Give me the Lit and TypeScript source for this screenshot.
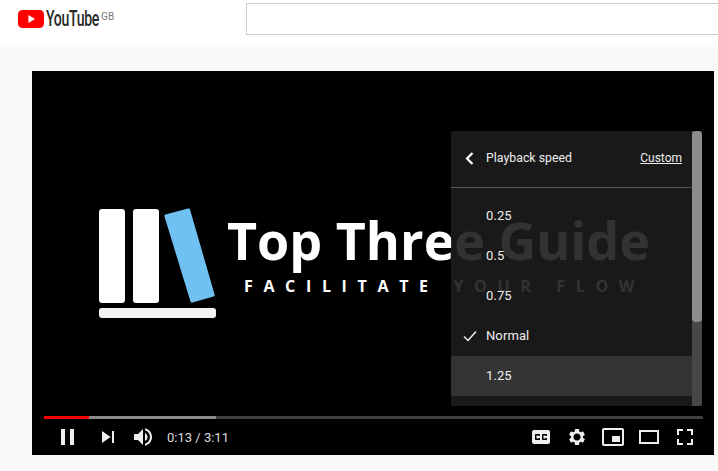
import { LitElement, html, css, svg } from "lit";
import { customElement } from "lit/decorators.js";

const speeds = ["0.25", "0.5", "0.75", "Normal", "1.25"];

const icon = (body: unknown) => html`<svg class="ic" viewBox="0 0 36 36" width="36" height="36">${body}</svg>`;

const leftIcons = [
  svg`<path d="M12,26h4V10h-4zM21,10v16h4V10z"/>`,
  svg`<path d="M12,24 20.5,18 12,12V24zM22,12v12h2V12z"/>`,
  svg`<path d="M8,21L12,21L17,26L17,10L12,15L8,15L8,21ZM19,14L19,22C20.48,21.32 21.5,19.77 21.5,18C21.5,16.26 20.48,14.74 19,14ZM19,11.29C21.89,12.15 24,14.83 24,18C24,21.17 21.89,23.85 19,24.71L19,26.77C23.01,25.86 26,22.28 26,18C26,13.72 23.01,10.14 19,9.23L19,11.29Z"/>`,
];
const rightIcons = [
  svg`<path d="M11,11C9.9,11 9,11.9 9,13L9,23C9,24.1 9.9,25 11,25L25,25C26.1,25 27,24.1 27,23L27,13C27,11.9 26.1,11 25,11L11,11ZM17,17L15.5,17L15.5,16.5L13.5,16.5L13.5,19.5L15.5,19.5L15.5,19L17,19L17,20C17,20.55 16.55,21 16,21L13,21C12.45,21 12,20.55 12,20L12,16C12,15.45 12.45,15 13,15L16,15C16.55,15 17,15.45 17,16L17,17ZM24,17L22.5,17L22.5,16.5L20.5,16.5L20.5,19.5L22.5,19.5L22.5,19L24,19L24,20C24,20.55 23.55,21 23,21L20,21C19.45,21 19,20.55 19,20L19,16C19,15.45 19.45,15 20,15L23,15C23.55,15 24,15.45 24,16L24,17Z" fill-rule="evenodd"/>`,
  svg`<path d="M23.94,18.78c.03-.25.05-.51.05-.78s-.02-.53-.05-.78l1.69-1.32c.15-.12.19-.34.1-.51l-1.6-2.77c-.1-.18-.31-.24-.49-.18l-1.99.8c-.42-.32-.86-.58-1.35-.78L20,10.34c-.03-.19-.2-.34-.4-.34h-3.2c-.2,0-.37.15-.4.34l-.3,2.12c-.49.2-.94.47-1.35.78l-1.99-.8c-.18-.07-.39,0-.49.18l-1.6,2.77c-.1.18-.06.39.1.51l1.69,1.32c-.04.25-.07.52-.07.78s.02.53.05.78l-1.69,1.32c-.15.12-.19.34-.1.51l1.6,2.77c.1.18.31.24.49.18l1.99-.8c.42.32.86.58 1.35.78l.3,2.12c.03.19.2.34.4.34h3.2c.2,0 .37-.15.4-.34l.3-2.12c.49-.2.94-.47 1.35-.78l1.99.8c.18.07.39,0 .49-.18l1.6-2.77c.1-.18.06-.39-.1-.51l-1.67-1.32zM18,21.6c-1.98,0-3.6-1.62-3.6-3.6s1.62-3.6 3.6-3.6 3.6,1.62 3.6,3.6-1.62,3.6-3.6,3.6z"/>`,
  svg`<path d="M25,17L17,17L17,23L25,23ZM29,25L29,10.98C29,9.88 28.1,9 27,9L9,9C7.9,9 7,9.88 7,10.98L7,25C7,26.1 7.9,27 9,27L27,27C28.1,27 29,26.1 29,25ZM27,25.02L9,25.02L9,10.97L27,10.97Z" fill-rule="evenodd"/>`,
  svg`<path d="M28,11V25H8V11ZM10,13V23H26V13Z" fill-rule="evenodd"/>`,
  svg`<path d="M10,16h2v-4h4v-2H10zM20,10v2h4v4h2V10zM24,24h-4v2h6v-6h-2zM12,20H10v6h6v-2h-4z"/>`,
];

@customElement("app-root")
export class AppRoot extends LitElement {
  static styles = css`
    :host { display: block; width: 718px; height: 471px; overflow: hidden; background: #f9f9f9; font-family: Roboto, "Liberation Sans", sans-serif; }
    .top { height: 47px; background: #fff; display: flex; align-items: flex-start; padding-left: 18px; box-sizing: border-box; }
    .yt { display: flex; align-items: flex-start; width: 228px; padding-top: 10px; box-sizing: border-box; flex: none; }
    .word { display: block; width: 52px; flex: none; margin-left: 2px; font-family: Roboto, sans-serif; font-size: 22px; line-height: 18px; font-weight: 500; color: #282828; letter-spacing: -0.5px; transform: scaleX(.64); transform-origin: left center; white-space: nowrap; }
    .gb { font-size: 10px; color: #777; line-height: 10px; margin-left: 3px; margin-top: 2px; font-family: Roboto, sans-serif; letter-spacing: .3px; }
    .search { flex: 1; height: 32px; margin-top: 3px; border: 1px solid #ccc; border-right: 0; background: #fff; box-sizing: border-box; }
    .main { padding: 24px 4px 0 32px; }
    .player { position: relative; width: 682px; height: 384px; background: #000; display: flex; flex-direction: column; overflow: hidden; }
    .stage { height: 345px; flex: none; display: flex; align-items: flex-start; padding: 137px 0 0 66px; box-sizing: border-box; }
    .brand { margin-left: 10px; font-family: "Open Sans", sans-serif; font-weight: 700; color: #fff; white-space: nowrap; }
    .brand h1 { margin: 0; font-size: 52px; line-height: 64px; font-weight: 700; }
    .brand p { margin: 3px 0 0 17px; font-size: 16px; line-height: 22px; letter-spacing: 10.65px; font-weight: 700; }
    .bar { height: 3px; margin: 0 11px 0 12px; flex: none; background: #3f3f3f; display: flex; }
    .red { width: 45px; background: #f00; }
    .buf { width: 127px; background: #8a8a8a; }
    .controls { height: 36px; display: flex; align-items: center; justify-content: space-between; padding: 0 11px 0 17px; flex: none; }
    .group { display: flex; align-items: center; }
    .ic { display: block; fill: #eee; flex: none; }
    .group .ic:first-child { margin-right: 5px; }
    .group.right .ic:first-child { margin-right: 0; }
    .time { margin-left: 5px; font-size: 13px; color: #ddd; }
    .panel { position: absolute; left: 419px; top: 60px; width: 251px; height: 275px; background: rgba(28,28,28,.9); border-radius: 2px; display: flex; overflow: hidden; color: #eee; font-size: 12.5px; }
    .list { flex: 1; min-width: 0; }
    .head { height: 56px; display: flex; align-items: center; border-bottom: 1px solid #555; padding: 0 10px 0 12px; }
    .head svg { width: 14px; height: 14px; margin-right: 9px; fill: none; stroke: #fff; stroke-width: 2.2; flex: none; }
    .head .title { flex: 1; font-size: 12.3px; padding-bottom: 2px; letter-spacing: .02px; }
    .head .custom { text-decoration: underline; font-size: 12px; padding-bottom: 2px; }
    .rows { padding-top: 8px; }
    .row { height: 40px; display: flex; align-items: center; font-size: 13px; letter-spacing: .1px; }
    .row.hi { background: #333; }
    .label { padding-bottom: 2px; }
    .tick { width: 35px; flex: none; display: flex; justify-content: center; padding-left: 3px; box-sizing: border-box; }
    .tick svg { width: 14px; height: 12px; fill: none; stroke: #eee; stroke-width: 1.5; }
    .track { width: 10px; flex: none; background: #474747; }
    .thumb { height: 191px; background: #8c8c8c; border-radius: 4px; }
  `;

  render() {
    return html`
      <div class="top">
        <div class="yt">
          <svg width="26" height="18" viewBox="0 0 26 18"><rect width="26" height="18" rx="4.5" fill="#f00"/><path d="M10.4 5.1 17 9l-6.6 3.9z" fill="#fff"/></svg>
          <span class="word">YouTube</span><span class="gb">GB</span>
        </div>
        <div class="search"></div>
      </div>
      <div class="main">
        <div class="player">
          <div class="stage">
            <svg width="119" height="112" viewBox="0 0 119 112">
              <rect x="1" y="1" width="26" height="94" rx="3" fill="#fff"/>
              <rect x="35" y="1" width="26" height="94" rx="3" fill="#fff"/>
              <path d="M67.5 6.5 90 .5q1.6-.4 2 1l24.6 85q.4 1.6-1 2L94.5 94.6q-1.6.4-2-1L66.5 8.5q-.4-1.6 1-2z" fill="#6fc1f2"/>
              <rect x="1" y="100" width="117" height="10" rx="3" fill="#f4f4f4"/>
            </svg>
            <div class="brand">
              <h1>Top Three Guide</h1>
              <p>FACILITATE YOUR FLOW</p>
            </div>
          </div>
          <div class="bar"><div class="red"></div><div class="buf"></div></div>
          <div class="controls">
            <div class="group">
              ${leftIcons.map((b) => icon(b))}
              <span class="time">0:13 / 3:11</span>
            </div>
            <div class="group right">${rightIcons.map((b) => icon(b))}</div>
          </div>
          <div class="panel">
            <div class="list">
              <div class="head">
                <svg viewBox="0 0 14 14"><path d="M9.5 1 4 6.5l5.5 5.5"/></svg>
                <span class="title">Playback speed</span>
                <span class="custom">Custom</span>
              </div>
              <div class="rows">
                ${speeds.map((s, i) => html`
                  <div class="row ${i === 4 ? "hi" : ""}">
                    <span class="tick">${s === "Normal" ? html`<svg viewBox="0 0 14 12"><path d="M1 6.5 5 10.5 13 1.5"/></svg>` : ""}</span>
                    <span class="label">${s}</span>
                  </div>`)}
              </div>
            </div>
            <div class="track"><div class="thumb"></div></div>
          </div>
        </div>
      </div>
    `;
  }
}
